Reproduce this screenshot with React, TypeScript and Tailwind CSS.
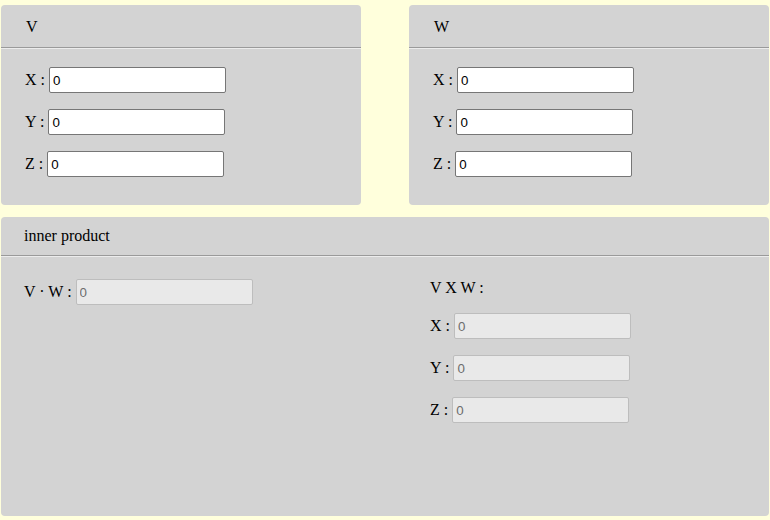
// React
import { useState } from "react";

interface Vec {
  x: string;
  y: string;
  z: string;
}

const serif = "font-['Liberation_Serif',serif] text-[16px] text-black";
const inputText = "font-['Liberation_Sans',Arial,sans-serif] text-[13.33px]";

const Divider = () => (
  <div className="h-[2px] border-t border-t-[#9a9a9a] border-b border-b-[#ececec]" />
);

interface FieldProps {
  label: string;
  value: string;
  onChange?: (v: string) => void;
  disabled?: boolean;
}

const Field = ({ label, value, onChange, disabled }: FieldProps) => (
  <label className={`flex items-center h-[26px] ${serif}`}>
    <span className="whitespace-pre">{label} : </span>
    {disabled ? (
      <input
        type="text"
        value={value}
        disabled
        readOnly
        className={`w-[177px] h-[26px] px-[3px] rounded-[2px] border border-[#bdbdbd] bg-[#e9e9e9] text-[#6d6d6d] ${inputText}`}
      />
    ) : (
      <input
        type="text"
        value={value}
        onChange={(e) => onChange?.(e.target.value)}
        className={`w-[177px] h-[26px] px-[3px] rounded-[2px] border border-[#767676] bg-white text-black outline-none ${inputText}`}
      />
    )}
  </label>
);

interface VectorPanelProps {
  name: string;
  vec: Vec;
  setVec: (v: Vec) => void;
}

const VectorPanel = ({ name, vec, setVec }: VectorPanelProps) => (
  <section className="w-[360px] h-[200px] bg-[#d3d3d3] rounded-[4px]">
    <header className={`h-[42px] flex items-center pl-[25px] pt-[2px] ${serif}`}>{name}</header>
    <Divider />
    <div className="flex flex-col gap-[16px] pt-[18px] pl-[24px]">
      <Field label="X" value={vec.x} onChange={(x) => setVec({ ...vec, x })} />
      <Field label="Y" value={vec.y} onChange={(y) => setVec({ ...vec, y })} />
      <Field label="Z" value={vec.z} onChange={(z) => setVec({ ...vec, z })} />
    </div>
  </section>
);

export default function App() {
  const [v, setV] = useState<Vec>({ x: "0", y: "0", z: "0" });
  const [w, setW] = useState<Vec>({ x: "0", y: "0", z: "0" });

  const n = (s: string) => Number(s) || 0;
  const dot = n(v.x) * n(w.x) + n(v.y) * n(w.y) + n(v.z) * n(w.z);
  const cx = n(v.y) * n(w.z) - n(v.z) * n(w.y);
  const cy = n(v.z) * n(w.x) - n(v.x) * n(w.z);
  const cz = n(v.x) * n(w.y) - n(v.y) * n(w.x);

  return (
    <div className="w-[770px] h-[520px] bg-[#ffffdc] pt-[5px] pl-[1px]">
      <div className="flex gap-[48px]">
        <VectorPanel name="V" vec={v} setVec={setV} />
        <VectorPanel name="W" vec={w} setVec={setW} />
      </div>

      <section className="mt-[12px] w-[768px] h-[299px] bg-[#d3d3d3] rounded-[4px]">
        <header className={`h-[38px] flex items-center pl-[23px] ${serif}`}>inner product</header>
        <Divider />
        <div className="flex pt-[22px]">
          <div className="w-[429px] pl-[23px]">
            <Field label="V · W" value={String(dot)} disabled />
          </div>
          <div className="flex flex-col">
            <div className={`h-[20px] mt-[-1px] leading-[20px] ${serif}`}>V X W :</div>
            <div className="flex flex-col gap-[16px] mt-[15px]">
              <Field label="X" value={String(cx)} disabled />
              <Field label="Y" value={String(cy)} disabled />
              <Field label="Z" value={String(cz)} disabled />
            </div>
          </div>
        </div>
      </section>
    </div>
  );
}
